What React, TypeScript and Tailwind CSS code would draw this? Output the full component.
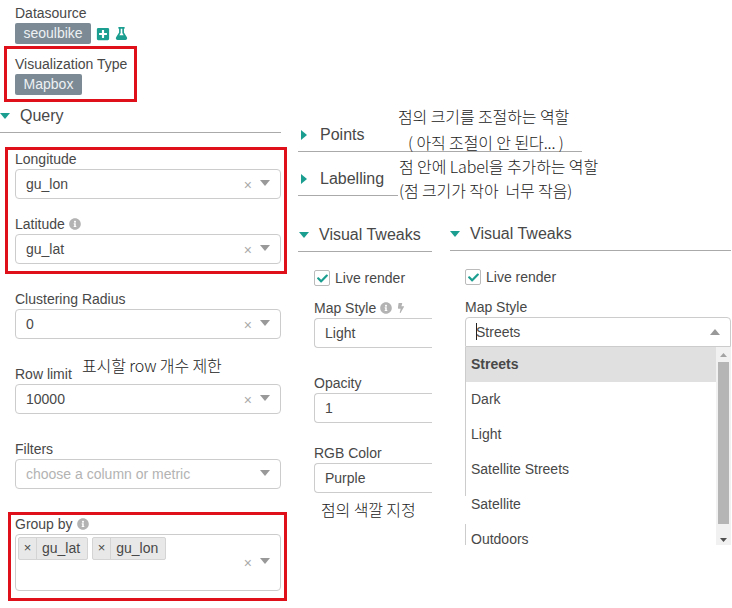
import { FaPlusSquare, FaFlask, FaInfoCircle, FaBolt, FaCheck } from "react-icons/fa";

const Down = ({ className = "" }: { className?: string }) => (
  <svg width="10" height="6" viewBox="0 0 10 6" className={className}><path d="M0 0H10L5 6Z" fill="#1b9e90" /></svg>
);
const Right = () => (
  <svg width="6" height="10" viewBox="0 0 6 10"><path d="M0 0L6 5L0 10Z" fill="#1b9e90" /></svg>
);

function Caret({ up = false }: { up?: boolean }) {
  return (
    <svg width="10" height="6" viewBox="0 0 10 6" className="shrink-0">
      <path d={up ? "M0 6H10L5 0Z" : "M0 0H10L5 6Z"} fill="#999" />
    </svg>
  );
}

function X() {
  return <span className="text-[14px] leading-none text-[#aaa] mr-[8px] mt-[1px]">×</span>;
}

function Select({ value, clear = true, placeholder = false }: { value: string; clear?: boolean; placeholder?: boolean }) {
  return (
    <div className="h-[30px] flex items-center border border-[#ccc] rounded-[4px] pl-[10px] pr-[10px] bg-white">
      <span className={placeholder ? "flex-1 text-[#b3b3b3]" : "flex-1 text-[#484848]"}>{value}</span>
      {clear && <X />}
      <span className="-mt-[3px]"><Caret /></span>
    </div>
  );
}

function Label({ children, info = false }: { children: React.ReactNode; info?: boolean }) {
  return (
    <div className="h-5 leading-5 flex items-center gap-[4px] text-[#484848]">
      {children}
      {info && <FaInfoCircle className="text-[#b3b3b3] text-[12px]" />}
    </div>
  );
}

function Clipped({ value }: { value: string }) {
  return (
    <div className="h-[30px] flex items-center border border-r-0 border-[#ccc] rounded-l-[4px] pl-[10px] text-[#484848]">{value}</div>
  );
}

function Check() {
  return (
    <div className="flex items-center h-5 text-[#484848] gap-[5px]">
      <span className="w-[16px] h-[16px] border border-[#bbb] rounded-[2px] flex items-center justify-center bg-white">
        <FaCheck className="text-[#1b9e90] text-[11px]" />
      </span>
      Live render
    </div>
  );
}

function Tag({ label }: { label: string }) {
  return (
    <div className="flex h-[23px] border border-[#d4d4d4] rounded-[2px] bg-[#e8e8e8] text-[#484848] items-center">
      <span className="w-[18px] text-center border-r border-[#d4d4d4] h-full leading-[19px] text-[13px]">×</span>
      <span className="pl-[5px] pr-[7px]">{label}</span>
    </div>
  );
}

const Note = ({ className, children }: { className: string; children: React.ReactNode }) => (
  <div className={"absolute whitespace-pre font-light font-['Noto_Sans_CJK_KR',sans-serif] tracking-[-0.1px] text-[16px] leading-[22px] text-[#222] " + className}>{children}</div>
);
const RedBox = ({ className }: { className: string }) => (
  <div className={"absolute border-[3px] border-[#e0101a] pointer-events-none " + className} />
);

export default function App() {
  return (
    <div className="relative w-[732px] h-[608px] overflow-hidden bg-white flex text-[14px] font-['Liberation_Sans','Noto_Sans_CJK_KR',sans-serif]">
      {/* left column */}
      <div className="w-[281px] shrink-0 pt-[3px]">
        <div className="pl-[15px]">
          <Label>Datasource</Label>
          <div className="flex items-center h-[21px] gap-[5px]">
            <span className="h-[21px] w-[76px] rounded-[2px] bg-[#7b8a95] text-[#eef1f3] flex items-center justify-center">seoulbike</span>
            <FaPlusSquare className="text-[#1b9e90] text-[14px]" />
            <FaFlask className="text-[#1b9e90] text-[13px]" />
          </div>
          <div className="mt-[10px]"><Label>Visualization Type</Label></div>
          <span className="h-[21px] w-[67px] rounded-[2px] bg-[#7b8a95] text-[#eef1f3] flex items-center justify-center">Mapbox</span>
        </div>
        <div className="h-[33px] mt-[5px] flex items-center border-b border-[#aaa] gap-[10px] text-[16px] text-[#484848] mb-[16px]">
          <Down />
          Query
        </div>
        <div className="pl-[15px] flex flex-col">
          <Label>Longitude</Label>
          <Select value="gu_lon" />
          <div className="mt-[15px]"><Label info>Latitude</Label></div>
          <Select value="gu_lat" />
          <div className="mt-[25px]"><Label>Clustering Radius</Label></div>
          <Select value="0" />
          <div className="mt-[25px]"><Label>Row limit</Label></div>
          <Select value="10000" />
          <div className="mt-[25px]"><Label>Filters</Label></div>
          <Select value="choose a column or metric" clear={false} placeholder />
          <div className="mt-[25px]"><Label info>Group by</Label></div>
          <div className="h-[57px] border border-[#ccc] rounded-[4px] pl-[2px] pt-[2px] pr-[10px] flex">
            <div className="flex-1 flex gap-[4px] items-start">
              <Tag label="gu_lat" />
              <Tag label="gu_lon" />
            </div>
            <div className="flex items-center -mt-[2px]">
              <X />
              <span className="-mt-[3px]"><Caret /></span>
            </div>
          </div>
        </div>
      </div>

      {/* middle column */}
      <div className="ml-[17px] w-[134px] shrink-0 pt-[118px] text-[#484848]">
        <div className="h-[34px] flex items-center gap-[13px] pl-[3px] text-[16px] w-[284px] border-b border-[#aaa]">
          <Right />
          Points
        </div>
        <div className="h-[44px] pt-[10px] flex items-center gap-[13px] pl-[3px] text-[16px] w-[100px] border-b border-[#aaa]">
          <Right />
          Labelling
        </div>
        <div className="h-[56px] pt-[22px] flex items-center gap-[10px] pl-[1px] text-[16px] border-b border-[#aaa]">
          <Down />
          Visual Tweaks
        </div>
        <div className="pl-[16px]">
          <div className="mt-[16px]"><Check /></div>
          <div className="mt-[10px] flex items-center h-5 gap-[4px]">
            Map Style
            <FaInfoCircle className="text-[#b3b3b3] text-[12px]" />
            <FaBolt className="text-[#b3b3b3] text-[10px]" />
          </div>
          <Clipped value="Light" />
          <div className="mt-[25px]"><Label>Opacity</Label></div>
          <Clipped value="1" />
          <div className="mt-[20px]"><Label>RGB Color</Label></div>
          <Clipped value="Purple" />
        </div>
      </div>

      {/* right column */}
      <div className="ml-[18px] w-[281px] shrink-0 pt-[217px] text-[#484848]">
        <div className="h-[34px] flex items-center gap-[10px] text-[16px] border-b border-[#aaa]">
          <Down />
          Visual Tweaks
        </div>
        <div className="pl-[15px]">
          <div className="mt-[16px]"><Check /></div>
          <div className="mt-[10px]"><Label>Map Style</Label></div>
          <div className="h-[30px] flex items-center border border-[#ccc] rounded-t-[4px] pl-[10px] pr-[10px]">
            <span className="flex-1 relative">
              Streets
              <span className="absolute left-0 top-[1px] w-px h-[17px] bg-[#222]" />
            </span>
            <Caret up />
          </div>
          <div className="h-[198px] flex overflow-hidden border-l border-[#ccc]">
            <div className="flex-1 min-w-0">
              <div className="h-[35px] pl-[5px] flex items-center font-bold bg-[#e0e0e0]">Streets</div>
              <div className="h-[35px] pl-[5px] flex items-center">Dark</div>
              <div className="h-[35px] pl-[5px] flex items-center">Light</div>
              <div className="h-[35px] pl-[5px] flex items-center">Satellite Streets</div>
              <div className="h-[35px] pl-[5px] flex items-center">Satellite</div>
              <div className="h-[35px] pl-[5px] flex items-center">Outdoors</div>
            </div>
            <div className="w-[15px] shrink-0 bg-[#f1f1f1] flex flex-col items-center">
              <svg width="7" height="4" viewBox="0 0 7 4" className="mt-[6px]"><path d="M0 4H7L3.5 0Z" fill="#a3a3a3" /></svg>
              <div className="w-[11px] h-[162px] mt-[5px] bg-[#b5b5b5]" />
              <svg width="7" height="4" viewBox="0 0 7 4" className="mt-[14px]"><path d="M0 0H7L3.5 4Z" fill="#505050" /></svg>
            </div>
          </div>
        </div>
      </div>

      {/* annotations over the screenshot */}
      <Note className="left-[398px] top-[105px]">점의 크기를 조절하는 역할</Note>
      <Note className="left-[408px] top-[131px]">( 아직 조절이 안 된다... )</Note>
      <Note className="left-[399px] top-[155px]">점 안에 Label을 추가하는 역할</Note>
      <Note className="left-[399px] top-[179px]">(점 크기가 작아  너무 작음)</Note>
      <Note className="left-[82px] top-[354px]">표시할 row 개수 제한</Note>
      <Note className="left-[321px] top-[498px]">점의 색깔 지정</Note>
      <div className="absolute left-[465px] top-[496px] w-px h-[28px] bg-white" />

      <RedBox className="left-[4px] top-[46px] w-[133px] h-[56px]" />
      <RedBox className="left-[5px] top-[147px] w-[282px] h-[127px]" />
      <RedBox className="left-[8px] top-[512px] w-[279px] h-[89px]" />
    </div>
  );
}
